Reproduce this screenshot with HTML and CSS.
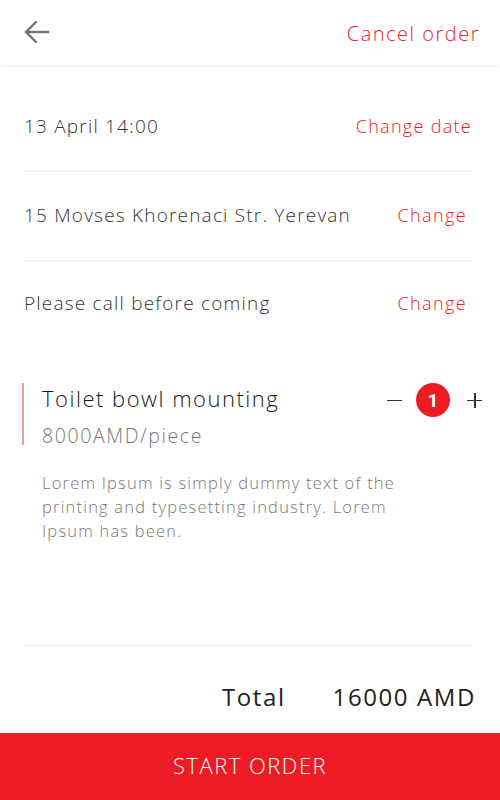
FILE: index.html
```html
<!DOCTYPE html>
<html>
<head>
<meta charset="utf-8">
<link rel="stylesheet" href="styles.css">
</head>
<body>
<div class="app">
  <header class="topbar">
    <button class="back" aria-label="Back">
      <svg width="26" height="24" viewBox="0 0 26 24"><path d="M25 12H2.5M12.5 1.5L2 12l10.5 10.5" fill="none" stroke="#737373" stroke-width="2.4"/></svg>
    </button>
    <span class="cancel">Cancel order</span>
  </header>
  <main class="content">
    <div class="row row-first">
      <span class="row-text">13 April 14:00</span>
      <span class="row-link row-link-wide">Change date</span>
    </div>
    <div class="row">
      <span class="row-text">15 Movses Khorenaci Str. Yerevan</span>
      <span class="row-link">Change</span>
    </div>
    <div class="row row-last">
      <span class="row-text">Please call before coming</span>
      <span class="row-link">Change</span>
    </div>
    <section class="item">
      <div class="item-head">
        <div class="item-info">
          <div class="item-title">Toilet bowl mounting</div>
          <div class="item-price">8000AMD/piece</div>
        </div>
        <div class="qty">
          <span class="qty-btn minus"></span>
          <span class="qty-badge">1</span>
          <span class="qty-btn plus"></span>
        </div>
      </div>
      <p class="item-desc">Lorem Ipsum is simply dummy text of the printing and typesetting industry. Lorem Ipsum has been.</p>
    </section>
    <div class="total">
      <span class="total-label">Total</span>
      <span class="total-value">16000 AMD</span>
    </div>
  </main>
  <button class="start">START ORDER</button>
</div>
</body>
</html>
```

FILE: styles.css
```css
* { box-sizing: border-box; }
html, body { margin: 0; padding: 0; background: #fff; }
body { font-family: "Open Sans", "Noto Sans", sans-serif; color: #222; }
.app { width: 500px; height: 800px; display: flex; flex-direction: column; overflow: hidden; }

.topbar {
  height: 65px; flex: none;
  display: flex; align-items: center; justify-content: space-between;
  padding: 0 20px 0 24px;
  box-shadow: 0 1px 4px rgba(0,0,0,0.07);
  position: relative; z-index: 1;
}
.back { border: 0; background: none; padding: 0; display: flex; margin-top: -1px; }
.cancel { color: #ee1c25; font-size: 20px; font-weight: 300; letter-spacing: 1.5px; margin-top: 2px; margin-right: 0; }

.content { flex: 1; padding: 0 28px 0 24px; display: flex; flex-direction: column; }
.row {
  display: flex; justify-content: space-between; align-items: center;
  height: 89px; border-bottom: 1px solid #efefef;
  padding-right: 6px;
}
.row-first { height: 107px; padding-top: 18px; }
.row-last { border-bottom: 0; height: 87px; padding-bottom: 0; }
.row > span { margin-top: -3px; }
.row-text { font-size: 19px; font-weight: 300; color: #333; letter-spacing: 1.2px; }
.row-link { font-size: 18px; font-weight: 300; color: #ee1c25; letter-spacing: 1.4px; margin-right: -1px; }
.row-link-wide { margin-right: -6px; letter-spacing: 1.3px; }

.item { margin-top: 35px; height: 263px; border-bottom: 1px solid #ececec; }
.item-head { display: flex; justify-content: space-between; align-items: flex-start; border-left: 2px solid #f19ca0; margin-left: -2px; padding-left: 18px; height: 62px; margin-right: -10px; }
.item-title { font-size: 22px; font-weight: 300; color: #1a1a1a; line-height: 30px; margin-top: 0; letter-spacing: 1.5px; }
.item-price { font-size: 19.5px; font-weight: 300; color: #777; line-height: 24px; margin-top: 11px; letter-spacing: 1.6px; }
.qty { display: flex; align-items: center; margin-top: 0; }
.qty-btn { width: 15px; height: 15px; position: relative; }
.minus { margin-right: 14px; }
.plus { margin-left: 17px; }
.qty-btn::before { content: ""; position: absolute; left: 0; top: 7px; width: 15px; height: 1.5px; background: #333; }
.plus::after { content: ""; position: absolute; left: 7px; top: 0; width: 1.5px; height: 15px; background: #333; }
.qty-badge {
  width: 34px; height: 34px; border-radius: 50%; background: #ec1c24; color: #fff;
  display: flex; align-items: center; justify-content: center;
  font-family: "Roboto", sans-serif; font-weight: 700; font-size: 19px;
}
.item-desc { margin: 26px 0 0 18px; font-size: 16.5px; font-weight: 300; color: #777; line-height: 24px; max-width: 372px; letter-spacing: 1.2px; }

.total { display: flex; justify-content: flex-end; align-items: center; gap: 47px; height: 87px; padding-top: 14px; margin-right: -4px; }
.total-label, .total-value { font-size: 24px; font-weight: 400; color: #222; letter-spacing: 1.6px; }

.start {
  flex: none; height: 70px; border: 0; width: 100%;
  background: #ed1c24; color: #fff; font-family: "Open Sans", sans-serif;
  font-size: 22px; font-weight: 300; letter-spacing: 1.5px; padding: 0 0 6px;
}
```
